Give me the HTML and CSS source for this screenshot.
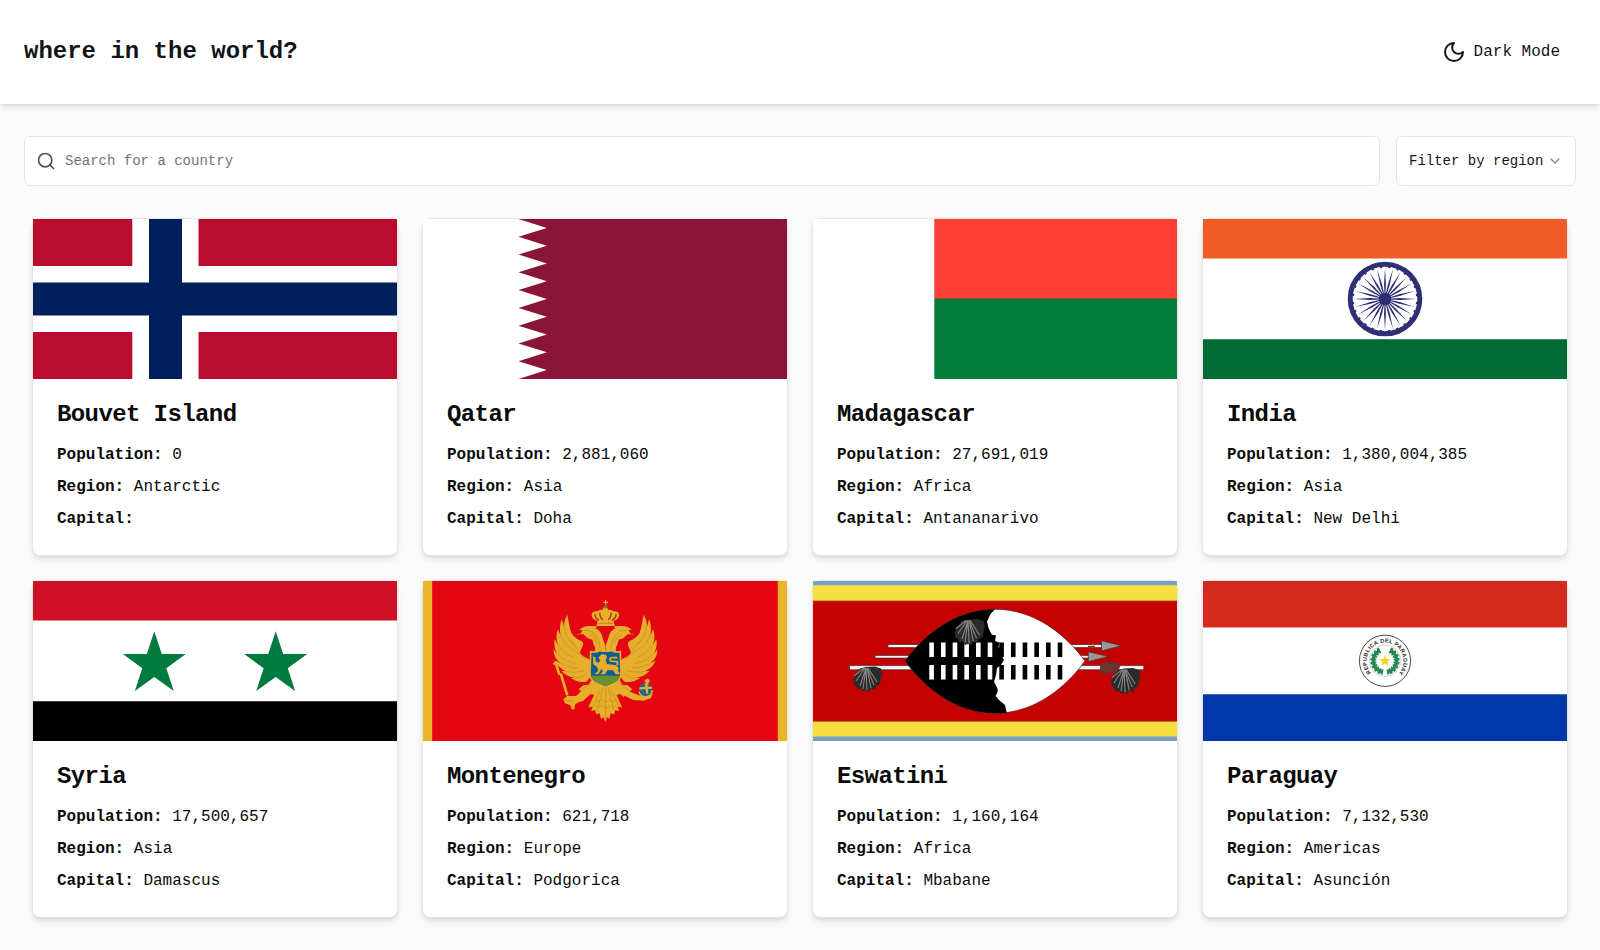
FILE: index.html
```html
<!DOCTYPE html>
<html lang="en">
<head>
<meta charset="utf-8">
<title>Where in the world?</title>
<link rel="stylesheet" href="styles.css">
</head>
<body>
<header class="header">
  <h1 class="brand">where in the world?</h1>
  <button class="theme" type="button">
    <svg class="icon-moon" viewBox="0 0 24 24"><path d="M12 3a6 6 0 0 0 9 9 9 9 0 1 1-9-9Z"/></svg>
    <span>Dark Mode</span>
  </button>
</header>
<main class="main">
  <div class="toolbar">
    <label class="search">
      <svg class="icon-search" viewBox="0 0 24 24"><circle cx="11" cy="11" r="8"/><path d="m21 21-4.3-4.3"/></svg>
      <input class="search-input" type="text" placeholder="Search for a country">
    </label>
    <button class="filter" type="button">
      <span>Filter by region</span>
      <svg class="icon-chevron" viewBox="0 0 24 24"><path d="m6 9 6 6 6-6"/></svg>
    </button>
  </div>
  <section class="grid">
    <article class="card">
      <svg class="flag" viewBox="0 0 364 160">
        <path fill="#ba0c2f" d="M0 0h364v160H0z"/>
        <path fill="#fff" d="M99.3 0h66.2v160H99.3zM0 46.9h364v66.2H0z"/>
        <path fill="#00205b" d="M116 0h33v160h-33zM0 63.5h364v33H0z"/>
      </svg>
      <div class="body"><h2 class="name">Bouvet Island</h2><div class="facts"><p><b>Population:</b> 0</p><p><b>Region:</b> Antarctic</p><p><b>Capital:</b></p></div></div>
    </article>
    <article class="card">
      <svg class="flag" viewBox="0 0 364 160">
        <path fill="#fff" d="M0 0h364v160H0z"/>
        <path fill="#8a1538" d="M364 0H95.500l28.300 8.900-28.300 8.900 28.300 8.900-28.300 8.900 28.300 8.800-28.300 8.900 28.300 8.900-28.300 8.900 28.300 8.900-28.300 8.900 28.300 8.900-28.300 8.900 28.300 8.900-28.300 8.800 28.300 8.900-28.300 8.900 28.300 8.900-28.300 8.900H364z"/>
      </svg>
      <div class="body"><h2 class="name">Qatar</h2><div class="facts"><p><b>Population:</b> 2,881,060</p><p><b>Region:</b> Asia</p><p><b>Capital:</b> Doha</p></div></div>
    </article>
    <article class="card">
      <svg class="flag" viewBox="0 0 364 160">
        <path fill="#fff" d="M0 0h364v160H0z"/>
        <path fill="#fc3d32" d="M121.3 0H364v80H121.3z"/>
        <path fill="#007e3a" d="M121.3 79.600H364V160H121.3z"/>
      </svg>
      <div class="body"><h2 class="name">Madagascar</h2><div class="facts"><p><b>Population:</b> 27,691,019</p><p><b>Region:</b> Africa</p><p><b>Capital:</b> Antananarivo</p></div></div>
    </article>
    <article class="card">
      <svg class="flag" viewBox="0 0 364 160">
        <defs>
          <path id="spoke" d="M-.3 0-.95-15 0-31 .95-15 .3 0 .95 15 0 31-.95 15z"/>
          <g id="spokes"><use href="#spoke"/><use href="#spoke" transform="rotate(15)"/><use href="#spoke" transform="rotate(30)"/></g>
        </defs>
        <path fill="#fff" d="M0 0h364v160H0z"/>
        <path fill="#f15b25" d="M0 0h364v39.6H0z"/>
        <path fill="#006a35" d="M0 120.3h364V160H0z"/>
        <g transform="translate(182 80)" fill="#2e2f75">
          <circle r="34.8" fill="none" stroke="#2e2f75" stroke-width="5"/>
          <circle r="32" fill="none" stroke="#2e2f75" stroke-width="1.6" stroke-dasharray="2.2 6.178" stroke-dashoffset="-3"/>
          <circle r="6.2"/>
          <use href="#spokes"/><use href="#spokes" transform="rotate(45)"/><use href="#spokes" transform="rotate(90)"/><use href="#spokes" transform="rotate(135)"/>
        </g>
      </svg>
      <div class="body"><h2 class="name">India</h2><div class="facts"><p><b>Population:</b> 1,380,004,385</p><p><b>Region:</b> Asia</p><p><b>Capital:</b> New Delhi</p></div></div>
    </article>
    <article class="card">
      <svg class="flag" viewBox="0 0 364 160">
        <path fill="#fff" d="M0 0h364v160H0z"/>
        <path fill="#ce1126" d="M0 0h364v39.5H0z"/>
        <path fill="#000" d="M0 120.3h364V160H0z"/>
        <path id="star" fill="#007a3d" d="m121.3 50.2 7.45 22.85h24.05l-19.45 14.15 7.4 22.9-19.45-14.15-19.45 14.15 7.4-22.9L89.8 73.05h24.05z"/>
        <use href="#star" x="121.4"/>
      </svg>
      <div class="body"><h2 class="name">Syria</h2><div class="facts"><p><b>Population:</b> 17,500,657</p><p><b>Region:</b> Asia</p><p><b>Capital:</b> Damascus</p></div></div>
    </article>
    <article class="card">
      <svg class="flag" viewBox="0 0 364 160">
        <path fill="#e8b42a" d="M0 0h364v160H0z"/>
        <path fill="#e40713" d="M9.2 0h345.6v160H9.2z"/>
        <g transform="translate(107 -1) scale(.3333)">
          <g id="wing">
            <path fill="#e6ae2b" d="M112 104C116 120 117 140 124 158 132 174 150 180 158 186 164 192 152 208 150 218 158 232 174 232 181 242V290C176 296 172 306 164 306 150 308 134 302 122 294L134 294C116 290 102 282 94 272L108 274C92 266 82 256 76 242L92 250C78 238 70 226 71 208L82 222C74 208 71 194 74 178L84 194C78 178 78 162 84 148L92 168C88 148 90 130 96 118L102 140C102 126 106 114 112 104Z"/>
            <path fill="none" stroke="#c98222" stroke-width="1.700" d="M103 140c3 22 12 40 28 52M93 168c6 16 18 32 36 42M85 194c8 16 24 30 46 38M83 222c12 14 30 24 54 28M92 250c14 8 32 14 54 14M108 274c16 4 34 4 54-2M134 294c12 0 26-4 38-14M120 180l30 36M132 210l36 28"/>
            <path fill="#e6ae2b" d="M150 163 158 151 148 150Q162 136 180 138L202 139 197 145Q215 153 219 178L226 196 226 214H194Q198 202 191 194L187 179 172 174 160 163Z"/>
            <path fill="none" stroke="#c98222" stroke-width="2" d="M164 152c14-3 26 4 34 16 6 9 10 20 12 36M180 166c10 3 18 12 20 24M150 163h-10"/>
            <path fill="#e6ae2b" d="M184 300 222 322 206 330 198 346 182 342 160 362 142 368 134 376V388L127 378 105 370 100 358 112 348 138 348 154 334 146 328 160 316 176 314Z"/>
          </g>
          <use href="#wing" transform="matrix(-1 0 0 1 453 0)"/>
          <path fill="#e40713" d="M290 338h70v60h-90v-30z"/>
          <path fill="#e6ae2b" d="M205 318h43l28 64-13-1 5 12-13-2-2 12-11-3-4 17-7-6-5 15-6-15-7 6-4-17-11 3-2-12-13 2 5-12-13 1z"/>
          <path fill="none" stroke="#c98222" stroke-width="1.700" d="m218 326-16 68M227 324v94M236 326l16 68M209 334l-22 48M245 334l22 48M198 360q10 10 18-2 11 14 22 0 10 12 18 2M194 378q10 8 20 0 13 12 26 0 10 8 20 0"/>
          <path fill="none" stroke="#e6ae2b" stroke-width="8" d="m76 244 12 40M92 280l20 66M116 352l14 36"/>
          <path fill="none" stroke="#e6ae2b" stroke-width="6" d="M70 252l14-5"/>
          <path fill="none" stroke="#c98222" stroke-width="2" d="M104 362l28 2M148 336l36-28M302 336l-36-28"/>
          <path fill="#e6ae2b" d="M262 316q18 4 34 18l30 12 20 2 22-6-6 13-22 7-30-2-32-16-18-13z"/>
          <circle cx="347" cy="329" r="20" fill="#16689a"/>
          <path fill="none" stroke="#e6ae2b" stroke-width="7" d="M328 325l38-2M348 309l4 32M352 296v18M344 303h15"/>
          <path fill="none" stroke="#e6ae2b" stroke-width="5" d="M327 335q4 15 20 16 18-2 20-20"/>
          <path fill="#e6ae2b" d="M200 138h54l-3-16q14-2 17-16-2-13-17-12-8-7-17-4-3-12-8-13-6 2-8 13-9-3-16 4-16-2-17 12 2 14 17 16z"/>
          <path fill="none" stroke="#b33018" stroke-width="4" d="M195 102q-1 12 12 19M210 98q-2 12 8 21M243 98q2 12-8 21M258 102q1 12-12 19"/>
          <path stroke="#c98222" stroke-width="3" d="M203 130h48"/>
          <path stroke="#e6ae2b" stroke-width="4" d="M227 60v14M220 67h14"/>
          <circle cx="227" cy="80" r="5" fill="#6d7840"/>
          <path fill="#0f5d94" stroke="#e6ae2b" stroke-width="5" d="M182 215q18 4 27-4 18 5 36 0 10 8 26 4l2 68q-3 20-20 27l-27 12-26-12q-18-8-20-27z"/>
          <path fill="#68912f" d="M184 287h86q-4 13-20 21l-24 11-23-11q-17-8-19-21z"/>
          <path fill="none" stroke="#e6ae2b" stroke-width="5" d="M262 256v-11l-20-2q-6-8 3-10h17"/>
          <path fill="#e6ae2b" d="m194 283 10-10-2-12-12-8-1-24 7 3 2 14 8 2 5-6-6-9 10-11 13 2 3 8-4 8 4 12 28 4 7 8-2 8 7 11h-14l-8-12-16-1-8 13h-14l8-9-5-7-9 16z"/>
        </g>
      </svg>
      <div class="body"><h2 class="name">Montenegro</h2><div class="facts"><p><b>Population:</b> 621,718</p><p><b>Region:</b> Europe</p><p><b>Capital:</b> Podgorica</p></div></div>
    </article>
    <article class="card">
      <svg class="flag" viewBox="0 0 364 160">
        <path fill="#78a1ca" d="M0 0h364v160H0z"/>
        <path fill="#f6e03e" d="M0 4.3h364v151.2H0z"/>
        <path fill="#c40000" stroke="#a64a10" stroke-width=".7" d="M-1 19.9h366v120.4H-1z"/>
        <g fill="#f6f6f6" stroke="#563030" stroke-width=".8">
          <path d="M75 63.5h215v3.1H75zM62 74.4h216v2.7H62zM36.5 84.6h294.3v4.2H36.5z"/>
          <path fill="#999" d="m288.5 59.8 20 4.9-20 5.2zM275.3 70.8l20 4.8-20 5z"/>
          <path fill="#6b3529" d="m288 82 7-1.2 10 1 1.5 4-2 6-14 .5-3.500-1.500z"/>
        </g>
        <path fill="#6b3030" d="M275 64.8h7v1.200h-7z"/>
        <path fill="#fff" stroke="#542020" stroke-width=".7" d="M92 80C111 54 142 28.200 182 28.200S253 54 272 80C253 106 222 132.300 182 132.300S111 106 92 80z"/>
        <path d="M92 80C111 54 142 28.200 182 28.200L177.500 33 174 40.700 175.500 47 178.700 53.500 183 54.500 182 60 186.500 61.500 185.500 66 189 67.500 188 73 191 79 188 84 184 87 183 94 181 100.700 184.700 108 184.500 111 182.700 115 186 119 192 124 193.700 131.700Q188 132.300 182 132.300C142 132.300 111 106 92 80z"/>
        <path id="slots" fill="none" stroke="#fff" stroke-width="14.500" stroke-dasharray="4.600 7.080" d="M116.300 68.700H180"/>
        <use href="#slots" y="22.600"/>
        <path id="slots-dark" fill="none" stroke="#000" stroke-width="14.500" stroke-dasharray="4.600 7.080" d="M186.300 68.700H250"/>
        <use href="#slots-dark" y="22.600"/>
        <g id="tassel">
          <path fill="#2b2b2b" d="m53 86 9-.5 6 2 1 5-1 5-1 5-4 3-1 3-4-1-2 3-3-1-3 1-2-3-3 1-2-4-2-1-1-5 3-6 4-5z"/>
          <path fill="none" stroke="#858585" stroke-width="1.100" d="m52 87-9 13M53 87l-6 18M53 87l-3 21M53 87l1 22M54 87l4 20M54 87l7 17M55 87l9 14M51 87l-10 8"/>
        </g>
        <use href="#tassel" transform="translate(257 -1) scale(1.020 1.030)"/>
        <use href="#tassel" transform="translate(100 -51) scale(1.040)"/>
      </svg>
      <div class="body"><h2 class="name">Eswatini</h2><div class="facts"><p><b>Population:</b> 1,160,164</p><p><b>Region:</b> Africa</p><p><b>Capital:</b> Mbabane</p></div></div>
    </article>
    <article class="card">
      <svg class="flag" viewBox="0 0 364 160">
        <path fill="#fff" d="M0 0h364v160H0z"/>
        <path fill="#d52b1e" d="M0 0h364v46.500H0z"/>
        <path fill="#0038a8" d="M0 113.300h364V160H0z"/>
        <g transform="translate(182 79.800)" fill="none">
          <circle r="25.600" stroke="#333" stroke-width=".9"/>
          <circle r="15.800" stroke="#aaa" stroke-width=".5"/>
          <path id="motto" d="M-14 12A18.400 18.400 0 1 1 14 12"/>
          <text class="motto"><textPath href="#motto" textLength="84">REPUBLICA DEL PARAGUAY</textPath></text>
          <path stroke="#1c8549" stroke-width="3.500" d="M-5-10.500A11.500 11.500 0 0 0-2 11.300M5-10.500A11.500 11.500 0 0 1 2 11.300"/>
          <path stroke="#2b8a55" stroke-width="6" stroke-dasharray="2.200 1.300" d="M-5-10.500A11.500 11.500 0 0 0-2 11.300M5-10.500A11.500 11.500 0 0 1 2 11.300"/>
          <path fill="#f2d21f" d="m0-5.800 1.400 4h4.300L2.300.8l1.300 4.100L0 2.400l-3.600 2.500L-2.300.8l-3.400-2.600h4.300z"/>
        </g>
      </svg>
      <div class="body"><h2 class="name">Paraguay</h2><div class="facts"><p><b>Population:</b> 7,132,530</p><p><b>Region:</b> Americas</p><p><b>Capital:</b> Asunción</p></div></div>
    </article>
  </section>
</main>
</body>
</html>
```
FILE: styles.css
```css
*,
*::before,
*::after {
  box-sizing: border-box;
}

body {
  margin: 0;
  min-height: 950px;
  overflow: hidden;
  background: #fafafa;
  color: #0a0a0a;
  font: 16px/24px "Liberation Mono", monospace;
}

h1,
h2,
p {
  margin: 0;
}

button,
input {
  font: inherit;
  color: inherit;
}

svg {
  display: block;
  flex: none;
}

.header {
  display: flex;
  align-items: center;
  justify-content: space-between;
  height: 104px;
  padding: 0 24px;
  background: #fff;
  color: #111517;
  box-shadow: 0 4px 6px -1px rgb(0 0 0 / 0.1), 0 2px 4px -2px rgb(0 0 0 / 0.1);
}

.brand {
  font-size: 24px;
  line-height: 32px;
}

.theme {
  display: flex;
  align-items: center;
  gap: 8px;
  padding: 8px 16px;
  border: 0;
  background: none;
}

.icon-moon,
.icon-search,
.icon-chevron {
  fill: none;
  stroke: currentColor;
  stroke-width: 2;
  stroke-linecap: round;
  stroke-linejoin: round;
}

.icon-moon {
  width: 24px;
  height: 24px;
}

.icon-search {
  width: 20px;
  height: 20px;
  color: #4b5563;
}

.icon-chevron {
  width: 16px;
  height: 16px;
  opacity: 0.5;
}

.main {
  padding: 32px 24px;
}

.toolbar {
  display: flex;
  gap: 16px;
  font-size: 14px;
  line-height: 20px;
}

.search,
.filter {
  display: flex;
  align-items: center;
  height: 50px;
  background: #fff;
  border: 1px solid #e5e5e5;
  border-radius: 6px;
}

.search {
  flex: 1;
  gap: 9px;
  padding: 0 11px;
}

.search-input {
  flex: 1;
  padding: 0;
  border: 0;
  outline: 0;
  background: none;
}

.search-input::placeholder {
  color: #757575;
}

.filter {
  justify-content: space-between;
  width: 180px;
  padding: 0 12px;
  color: #111517;
}

.grid {
  display: grid;
  grid-template-columns: repeat(4, 1fr);
  gap: 24px;
  padding: 32px 8px 0;
}

.card {
  background: #fff;
  border: 1px solid #e5e5e5;
  border-radius: 8px;
  box-shadow: 0 4px 6px -1px rgb(0 0 0 / 0.1), 0 2px 4px -2px rgb(0 0 0 / 0.1);
}

.flag {
  width: 100%;
  height: 160px;
}

.body {
  display: flex;
  flex-direction: column;
  gap: 16px;
  padding: 24px;
}

.name {
  font-size: 24px;
  line-height: 24px;
  letter-spacing: -0.025em;
}

.facts {
  display: grid;
  gap: 8px;
}

.motto {
  font: bold 5.5px "Liberation Sans", sans-serif;
  fill: #222;
}
```
